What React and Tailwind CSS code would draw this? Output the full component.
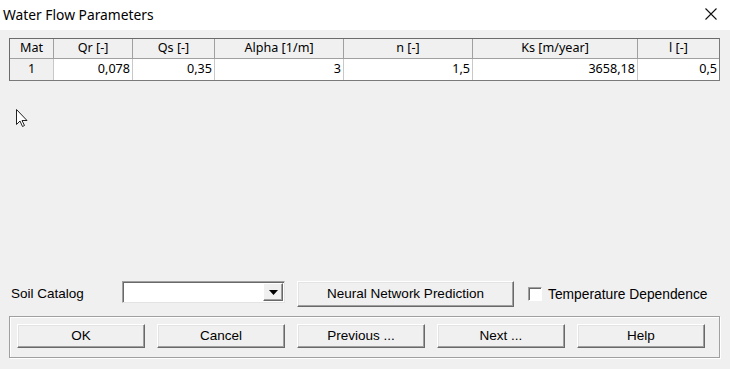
import React from "react";

const cols = ["Mat", "Qr [-]", "Qs [-]", "Alpha [1/m]", "n [-]", "Ks [m/year]", "l [-]"];
const vals = ["1", "0,078", "0,35", "3", "1,5", "3658,18", "0,5"];

function Btn({ children, className = "" }) {
  return (
    <div
      className={
        "flex items-center justify-center bg-[#f0f0f0] text-[13.5px] text-black pt-[1px] " +
        "border border-t-white border-l-white border-r-[#696969] border-b-[#696969] " +
        "shadow-[inset_-1px_-1px_0_#a0a0a0,inset_1px_1px_0_#e3e3e3] " +
        className
      }
      style={{ fontFamily: '"Liberation Sans", Arial, sans-serif' }}
    >
      {children}
    </div>
  );
}

export default function App() {
  return (
    <div className="relative w-[730px] h-[369px] bg-[#f0f0f0] flex flex-col overflow-hidden">
      {/* Title bar */}
      <div className="h-[30px] bg-white flex items-center justify-between pl-[3px] pr-[13px] shrink-0">
        <span className="text-[13.8px] text-black" style={{ fontFamily: '"Noto Sans", "Open Sans", sans-serif' }}>
          Water Flow Parameters
        </span>
        <svg width="12" height="12" viewBox="0 0 12 12" className="mt-[-2px]">
          <path d="M0.5 0.5 L11.5 11.5 M11.5 0.5 L0.5 11.5" stroke="#111" strokeWidth="1.1" fill="none" />
        </svg>
      </div>

      {/* Table */}
      <div className="mt-[8px] ml-[9px] w-[711px] border border-[#6b6b6b] border-b-[#7a7a7a] border-r-[#7a7a7a]"
        style={{ fontFamily: '"Noto Sans", "Open Sans", sans-serif' }}>
        <div className="grid grid-cols-[44px_79px_82px_129px_129px_165px_81px] text-[12.6px] text-black">
          {cols.map((c, i) => (
            <div
              key={c}
              className={
                "h-[20px] flex items-center justify-center bg-[#f0f0f0] border-b border-b-[#a0a0a0] " +
                (i < cols.length - 1 ? "border-r border-r-[#a0a0a0]" : "")
              }
            >
              {c}
            </div>
          ))}
          {vals.map((v, i) => (
            <div
              key={i}
              className={
                "h-[21px] flex items-center " +
                (i === 0 ? "justify-center bg-[#f0f0f0] " : "justify-end pr-[2px] bg-white ") +
                (i < vals.length - 1 ? "border-r border-r-[#c8c8c8]" : "")
              }
            >
              {v}
            </div>
          ))}
        </div>
      </div>

      {/* Soil catalog row */}
      <div className="mt-[200px] h-[26px] flex items-start text-[13.5px] text-black"
        style={{ fontFamily: '"Liberation Sans", Arial, sans-serif' }}>
        <span className="ml-[11px] mt-[3px] w-[110px]">Soil Catalog</span>
        <div className="ml-[1px] w-[163px] h-[22px] bg-white border border-t-[#a0a0a0] border-l-[#a0a0a0] border-r-[#e3e3e3] border-b-[#e3e3e3] shadow-[inset_1px_1px_0_#696969] flex justify-end items-center pr-[1px]">
          <div className="w-[20px] h-[18px] bg-[#f0f0f0] border border-t-white border-l-white border-r-[#696969] border-b-[#696969] shadow-[inset_-1px_-1px_0_#a0a0a0] flex items-center justify-center">
            <svg width="9" height="5" viewBox="0 0 9 5">
              <path d="M0 0 H9 L4.5 5 Z" fill="#000" />
            </svg>
          </div>
        </div>
        <Btn className="ml-[12px] w-[217px] h-[26px]">Neural Network Prediction</Btn>
        <div className="ml-[14px] mt-[6px] w-[14px] h-[14px] bg-white border border-t-[#a0a0a0] border-l-[#a0a0a0] border-r-white border-b-white shadow-[inset_1px_1px_0_#696969]" />
        <span className="ml-[6px] mt-[4px] text-[13.8px]">Temperature Dependence</span>
      </div>

      {/* Group box with buttons */}
      <div className="mt-[9px] ml-[9px] w-[711px] h-[42px] border border-[#a0a0a0] shadow-[inset_1px_1px_0_#ffffff,1px_1px_0_#ffffff] flex items-start pt-[7px] pl-[7px] gap-[12px]">
        <Btn className="w-[128px] h-[24px]">OK</Btn>
        <Btn className="w-[128px] h-[24px]">Cancel</Btn>
        <Btn className="w-[128px] h-[24px]">Previous ...</Btn>
        <Btn className="w-[128px] h-[24px]">Next ...</Btn>
        <Btn className="w-[128px] h-[24px]">Help</Btn>
      </div>

      {/* Mouse cursor */}
      <svg className="absolute left-[16px] top-[109px]" width="12" height="19" viewBox="0 0 12 19">
        <path d="M0.5 0.5 V15.5 L4 12 L6.5 17.5 L8.5 16.5 L6 11.5 H11 Z" fill="#fff" stroke="#222" strokeWidth="1" strokeLinejoin="miter" />
      </svg>
    </div>
  );
}
